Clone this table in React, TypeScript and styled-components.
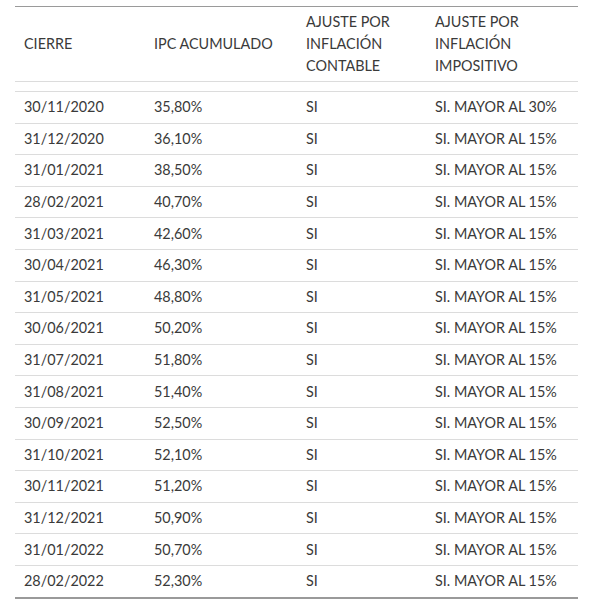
import React from "react";
import styled, { createGlobalStyle } from "styled-components";

const Global = createGlobalStyle`
  html, body { margin: 0; padding: 0; background: #fff; }
  body { font-family: Lato, "Open Sans", sans-serif; color: #3a3a3a; }
  * { box-sizing: border-box; }
`;

const Wrap = styled.div`
  padding: 6px 13px 0 15px;
`;

const Table = styled.table`
  width: 563px;
  border-collapse: collapse;
  table-layout: fixed;
  font-size: 14.4px;
  border-top: 1px solid #9a9a9a;
  border-bottom: 2px solid #9a9a9a;
`;

const Th = styled.th<{ $w: number }>`
  width: ${(p) => p.$w}px;
  text-align: left;
  font-weight: 400;
  line-height: 22px;
  padding: 4px 9px;
  vertical-align: middle;
  border-bottom: 1px solid #dcdcdc;
`;

const Spacer = styled.td`
  height: 10px;
  padding: 0;
  border-bottom: 1px solid #dcdcdc;
`;

const Row = styled.tr<{ $last?: boolean }>`
  border-bottom: ${(p) => (p.$last ? "none" : "1px solid #dcdcdc")};
`;

const Td = styled.td`
  line-height: 22px;
  padding: 4.3px 9px;
  white-space: nowrap;
`;

const rows: [string, string, string][] = [
  ["30/11/2020", "35,80%", "SI. MAYOR AL 30%"],
  ["31/12/2020", "36,10%", "SI. MAYOR AL 15%"],
  ["31/01/2021", "38,50%", "SI. MAYOR AL 15%"],
  ["28/02/2021", "40,70%", "SI. MAYOR AL 15%"],
  ["31/03/2021", "42,60%", "SI. MAYOR AL 15%"],
  ["30/04/2021", "46,30%", "SI. MAYOR AL 15%"],
  ["31/05/2021", "48,80%", "SI. MAYOR AL 15%"],
  ["30/06/2021", "50,20%", "SI. MAYOR AL 15%"],
  ["31/07/2021", "51,80%", "SI. MAYOR AL 15%"],
  ["31/08/2021", "51,40%", "SI. MAYOR AL 15%"],
  ["30/09/2021", "52,50%", "SI. MAYOR AL 15%"],
  ["31/10/2021", "52,10%", "SI. MAYOR AL 15%"],
  ["30/11/2021", "51,20%", "SI. MAYOR AL 15%"],
  ["31/12/2021", "50,90%", "SI. MAYOR AL 15%"],
  ["31/01/2022", "50,70%", "SI. MAYOR AL 15%"],
  ["28/02/2022", "52,30%", "SI. MAYOR AL 15%"],
];

export default function App() {
  return (
    <>
      <Global />
      <Wrap>
        <Table>
          <thead>
            <tr>
              <Th $w={130}>CIERRE</Th>
              <Th $w={152}>IPC ACUMULADO</Th>
              <Th $w={129}>
                AJUSTE POR
                <br />
                INFLACIÓN
                <br />
                CONTABLE
              </Th>
              <Th $w={152}>
                AJUSTE POR
                <br />
                INFLACIÓN
                <br />
                IMPOSITIVO
              </Th>
            </tr>
          </thead>
          <tbody>
            <tr>
              <Spacer colSpan={4} />
            </tr>
            {rows.map((r, i) => (
              <Row key={r[0]} $last={i === rows.length - 1}>
                <Td>{r[0]}</Td>
                <Td>{r[1]}</Td>
                <Td>SI</Td>
                <Td>{r[2]}</Td>
              </Row>
            ))}
          </tbody>
        </Table>
      </Wrap>
    </>
  );
}
